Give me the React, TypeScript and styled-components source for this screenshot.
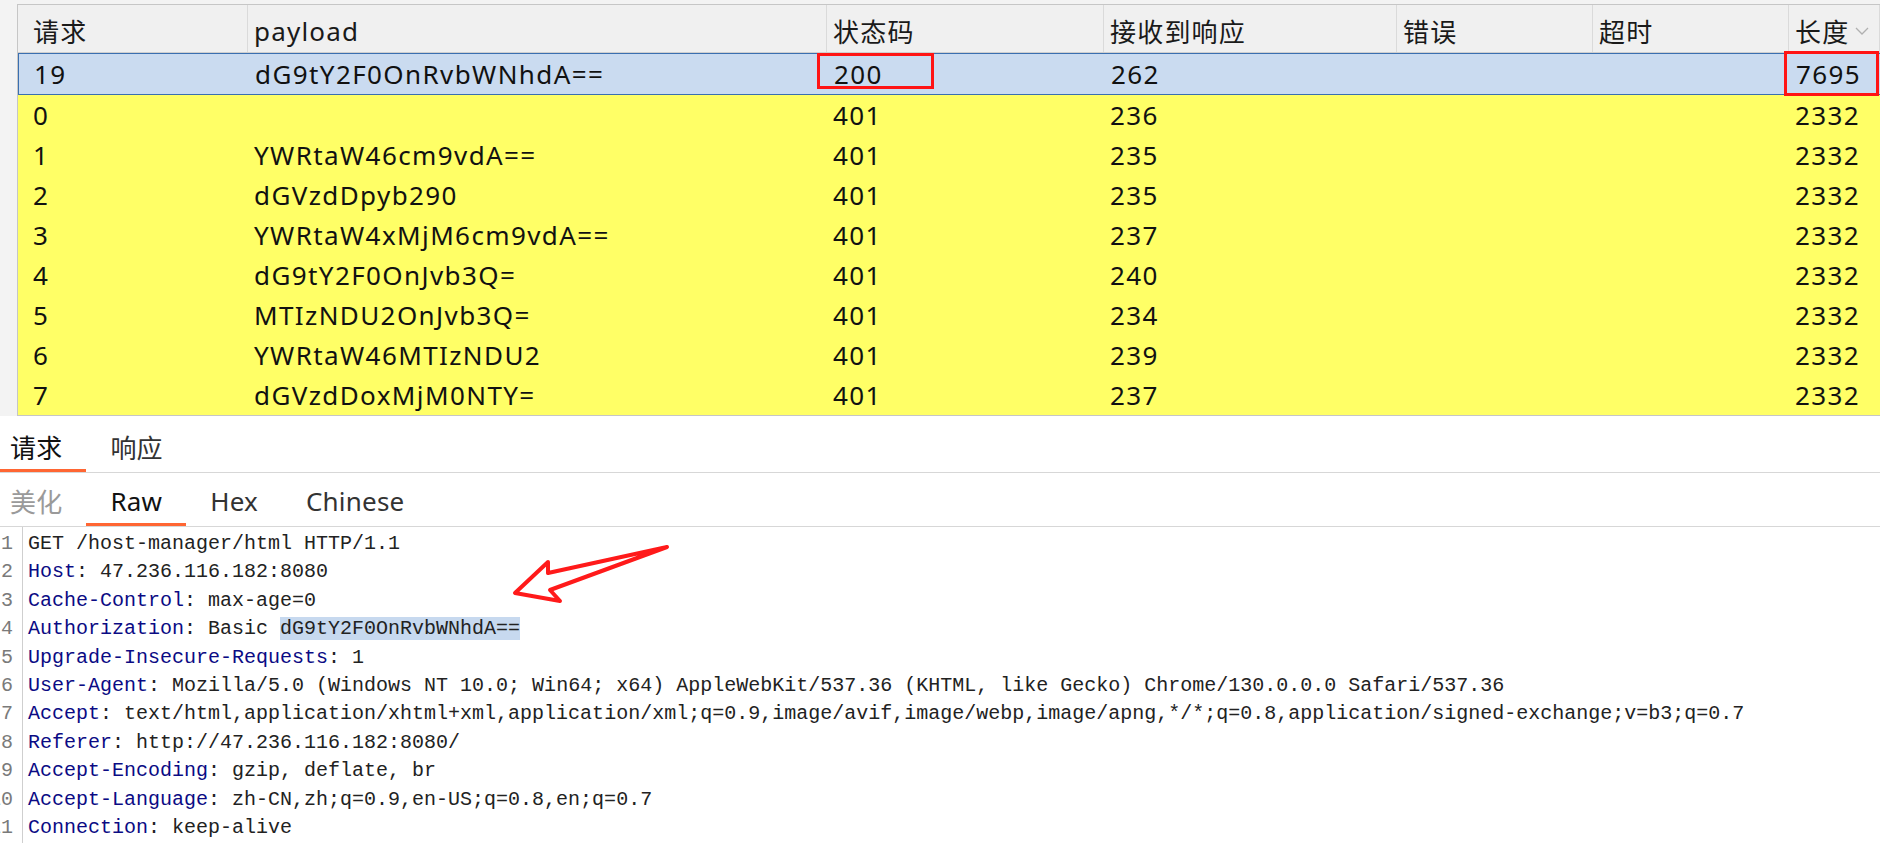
import React from "react";
import styled, { createGlobalStyle } from "styled-components";

const GlobalStyle = createGlobalStyle`
  html, body {
    margin: 0;
    padding: 0;
    background: #ffffff;
    overflow: hidden;
  }
  * { box-sizing: border-box; }
`;

const UI_FONT = `"Noto Sans", "Noto Sans CJK SC", sans-serif`;
const MONO_FONT = `"Liberation Mono", "DejaVu Sans Mono", monospace`;
const COLUMNS = "230px 579px 277px 293px 196px 196px 1fr";

const Page = styled.div`
  width: 1880px;
  height: 843px;
  overflow: hidden;
  display: flex;
  flex-direction: column;
  font-family: ${UI_FONT};
  color: #111;
`;

const TopArea = styled.div`
  background: #f3f3f3;
  padding: 4px 0 0 17px;
`;

const Table = styled.div`
  border: 1px solid #c6c6c6;
  border-right: none;
  background: #ffffff;
`;

const HeaderRow = styled.div`
  display: grid;
  grid-template-columns: ${COLUMNS};
  height: 48px;
  background: #f0f0f0;
  border-bottom: 1px solid #cfcfcf;
`;

const HeaderCell = styled.div<{ $first?: boolean }>`
  display: flex;
  align-items: center;
  padding-left: ${(p) => (p.$first ? "15px" : "6px")};
  padding-top: 4px;
  border-right: 1px solid #dadada;
  font-size: 26px;
  letter-spacing: 1.2px;
  color: #1a1a1a;
  white-space: nowrap;
`;

const SortMark = styled.svg`
  margin-left: 6px;
  margin-top: 2px;
`;

const Row = styled.div<{ $selected?: boolean }>`
  display: grid;
  grid-template-columns: ${COLUMNS};
  height: ${(p) => (p.$selected ? "42px" : "40px")};
  background: ${(p) => (p.$selected ? "#cadbf0" : "#ffff66")};
  border: ${(p) => (p.$selected ? "1px solid #3a6fb0" : "none")};
  border-right: none;
`;

const Cell = styled.div<{ $first?: boolean }>`
  position: relative;
  display: flex;
  align-items: center;
  padding-left: ${(p) => (p.$first ? "15px" : "6px")};
  font-size: 26px;
  letter-spacing: 1.4px;
  color: #111;
  white-space: nowrap;
`;

const Mark = styled.div<{ $l: number; $t: number; $w: number; $h: number }>`
  position: absolute;
  left: ${(p) => p.$l}px;
  top: ${(p) => p.$t}px;
  width: ${(p) => p.$w}px;
  height: ${(p) => p.$h}px;
  border: 3px solid #ff1414;
  pointer-events: none;
`;

const TabBar = styled.div<{ $h: number }>`
  display: flex;
  height: ${(p) => p.$h}px;
  border-bottom: 1px solid #d7d7d7;
  margin-left: -14px;
  background: #ffffff;
`;

const Tab = styled.div<{ $active?: boolean; $muted?: boolean; $pt: number }>`
  display: flex;
  align-items: center;
  padding: ${(p) => p.$pt}px 24px 0;
  border-bottom: 3px solid ${(p) => (p.$active ? "#ff6633" : "transparent")};
  font-size: 26px;
  letter-spacing: 0.2px;
  color: ${(p) => (p.$muted ? "#9a9a9a" : p.$active ? "#111" : "#333")};
  white-space: nowrap;
`;

const Editor = styled.div`
  position: relative;
  flex: 1;
  display: flex;
  background: #ffffff;
  padding-top: 3px;
`;

const Gutter = styled.div`
  width: 23px;
  margin-top: -3px;
  padding-top: 3px;
  border-right: 1px solid #cfcfcf;
  overflow: hidden;
  display: flex;
  flex-direction: column;
`;

const LineNo = styled.div`
  display: flex;
  justify-content: flex-end;
  height: 28.4px;
  line-height: 28.4px;
  padding-right: 9px;
  font-family: ${MONO_FONT};
  font-size: 20px;
  color: #7a7a7a;
  white-space: nowrap;
`;

const Code = styled.div`
  display: flex;
  flex-direction: column;
  padding-left: 5px;
`;

const Line = styled.div`
  height: 28.4px;
  line-height: 28.4px;
  font-family: ${MONO_FONT};
  font-size: 20px;
  color: #222;
  white-space: pre;
`;

const Key = styled.span`
  color: #0b0b84;
`;

const Picked = styled.span`
  background: #c7d9ef;
`;

const Arrow = styled.svg`
  position: absolute;
  left: 500px;
  top: 10px;
`;

type Entry = {
  id: string;
  payload: string;
  status: string;
  time: string;
  length: string;
};

const rows: Entry[] = [
  { id: "0", payload: "", status: "401", time: "236", length: "2332" },
  { id: "1", payload: "YWRtaW46cm9vdA==", status: "401", time: "235", length: "2332" },
  { id: "2", payload: "dGVzdDpyb290", status: "401", time: "235", length: "2332" },
  { id: "3", payload: "YWRtaW4xMjM6cm9vdA==", status: "401", time: "237", length: "2332" },
  { id: "4", payload: "dG9tY2F0OnJvb3Q=", status: "401", time: "240", length: "2332" },
  { id: "5", payload: "MTIzNDU2OnJvb3Q=", status: "401", time: "234", length: "2332" },
  { id: "6", payload: "YWRtaW46MTIzNDU2", status: "401", time: "239", length: "2332" },
  { id: "7", payload: "dGVzdDoxMjM0NTY=", status: "401", time: "237", length: "2332" },
];

const headers: [string, string][] = [
  ["Host", "47.236.116.182:8080"],
  ["Cache-Control", "max-age=0"],
  ["Authorization", ""],
  ["Upgrade-Insecure-Requests", "1"],
  ["User-Agent", "Mozilla/5.0 (Windows NT 10.0; Win64; x64) AppleWebKit/537.36 (KHTML, like Gecko) Chrome/130.0.0.0 Safari/537.36"],
  ["Accept", "text/html,application/xhtml+xml,application/xml;q=0.9,image/avif,image/webp,image/apng,*/*;q=0.8,application/signed-exchange;v=b3;q=0.7"],
  ["Referer", "http://47.236.116.182:8080/"],
  ["Accept-Encoding", "gzip, deflate, br"],
  ["Accept-Language", "zh-CN,zh;q=0.9,en-US;q=0.8,en;q=0.7"],
  ["Connection", "keep-alive"],
];

export default function App() {
  return (
    <Page>
      <GlobalStyle />
      <TopArea>
        <Table>
          <HeaderRow>
            <HeaderCell $first>请求</HeaderCell>
            <HeaderCell>payload</HeaderCell>
            <HeaderCell>状态码</HeaderCell>
            <HeaderCell>接收到响应</HeaderCell>
            <HeaderCell>错误</HeaderCell>
            <HeaderCell>超时</HeaderCell>
            <HeaderCell>
              长度
              <SortMark width="14" height="9" viewBox="0 0 14 9">
                <polyline points="1,1 7,7 13,1" fill="none" stroke="#b0b0b0" strokeWidth="1.3" />
              </SortMark>
            </HeaderCell>
          </HeaderRow>

          <Row $selected>
            <Cell $first>19</Cell>
            <Cell>dG9tY2F0OnRvbWNhdA==</Cell>
            <Cell>
              200
              <Mark $l={-11} $t={-1} $w={117} $h={36} />
            </Cell>
            <Cell>262</Cell>
            <Cell />
            <Cell />
            <Cell>
              7695
              <Mark $l={-6} $t={-3} $w={95} $h={45} />
            </Cell>
          </Row>

          {rows.map((r) => (
            <Row key={r.id}>
              <Cell $first>{r.id}</Cell>
              <Cell>{r.payload}</Cell>
              <Cell>{r.status}</Cell>
              <Cell>{r.time}</Cell>
              <Cell />
              <Cell />
              <Cell>{r.length}</Cell>
            </Row>
          ))}
        </Table>
      </TopArea>

      <TabBar $h={57}>
        <Tab $active $pt={9}>请求</Tab>
        <Tab $pt={9}>响应</Tab>
      </TabBar>
      <TabBar $h={54}>
        <Tab $muted $pt={6}>美化</Tab>
        <Tab $active $pt={6}>Raw</Tab>
        <Tab $pt={6}>Hex</Tab>
        <Tab $pt={6}>Chinese</Tab>
      </TabBar>

      <Editor>
        <Gutter>
          {Array.from({ length: 11 }, (_, i) => (
            <LineNo key={i}>{i + 1}</LineNo>
          ))}
        </Gutter>
        <Code>
          <Line>GET /host-manager/html HTTP/1.1</Line>
          {headers.map(([k, v]) => (
            <Line key={k}>
              <Key>{k}</Key>:{" "}
              {k === "Authorization" ? (
                <>
                  Basic <Picked>dG9tY2F0OnRvbWNhdA==</Picked>
                </>
              ) : (
                v
              )}
            </Line>
          ))}
        </Code>
        <Arrow width="180" height="80" viewBox="0 0 180 80">
          <polygon
            points="167,10 48,36 48,25 15,56 60,64 50,53"
            fill="none"
            stroke="#ff1a1a"
            strokeWidth="4"
            strokeLinejoin="round"
          />
        </Arrow>
      </Editor>
    </Page>
  );
}
